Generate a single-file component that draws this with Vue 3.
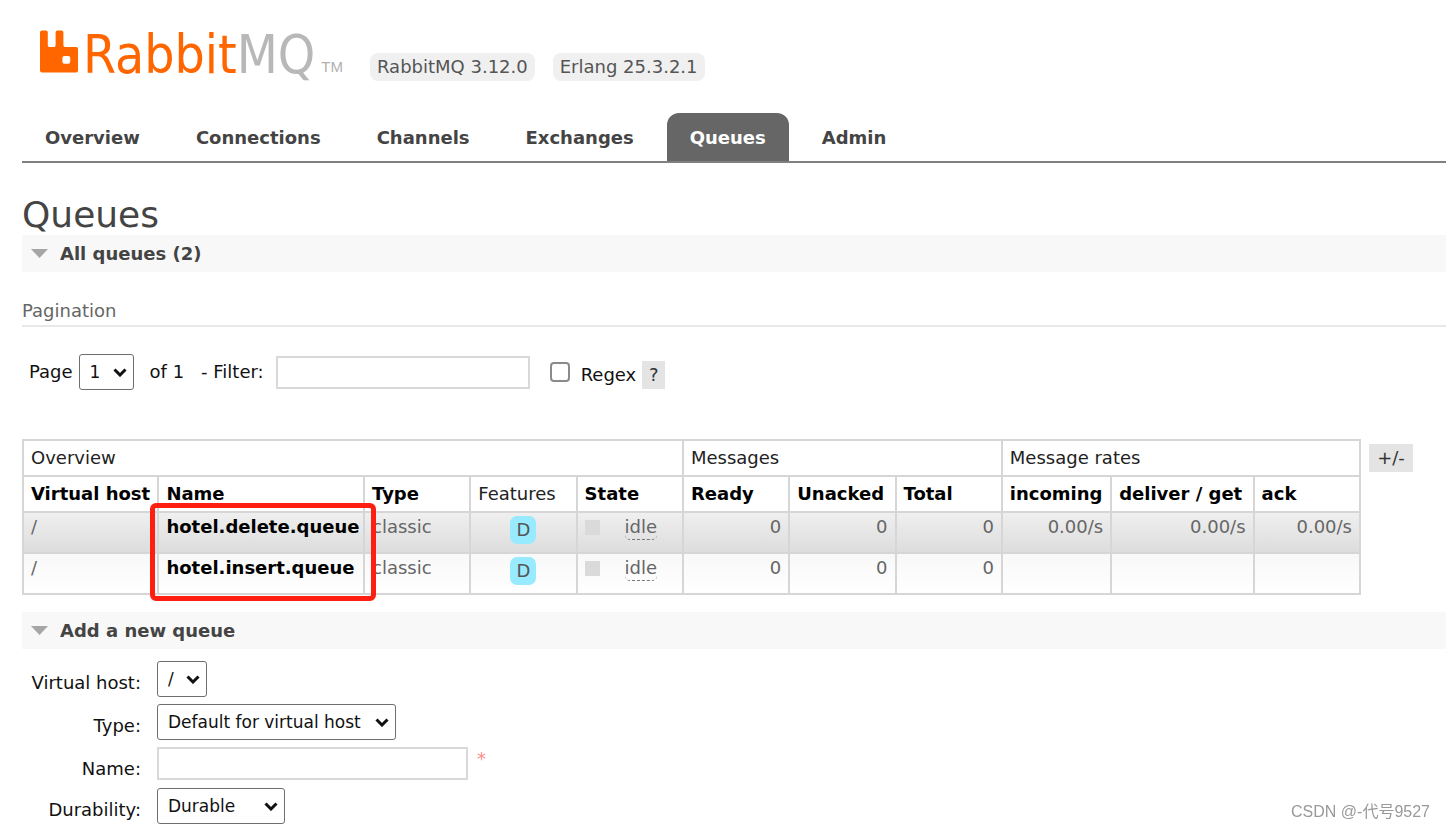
<script setup>
import { ref } from 'vue'

const tabs = ['Overview', 'Connections', 'Channels', 'Exchanges', 'Queues', 'Admin']
const current = ref('Queues')
const filter = ref('')
const regex = ref(false)
const queueName = ref('')

const queues = [
  { vhost: '/', name: 'hotel.delete.queue', type: 'classic', state: 'idle', counts: [0, 0, 0], rates: ['0.00/s', '0.00/s', '0.00/s'] },
  { vhost: '/', name: 'hotel.insert.queue', type: 'classic', state: 'idle', counts: [0, 0, 0], rates: ['', '', ''] },
]
</script>

<template>
  <div class="page">
    <header class="top">
      <a class="logo" href="#" aria-label="RabbitMQ">
        <svg class="mark" viewBox="0 0 40 43" aria-hidden="true">
          <path
            fill="#ff6600"
            fill-rule="evenodd"
            d="M2 0H6Q8 0 8 2V15Q8 17 10 17H14Q16 17 16 15V2Q16 0 18 0H22Q24 0 24 2V15Q24 17 26 17H37Q39 17 39 19V41Q39 43 37 43H2Q0 43 0 41V2Q0 0 2 0ZM25 26Q23 26 23 28V32Q23 34 25 34H29Q31 34 31 32V28Q31 26 29 26Z"
          />
        </svg>
        <span class="word">Rabbit<span class="grey">MQ</span></span>
        <span class="tm">TM</span>
      </a>
      <span class="version">RabbitMQ 3.12.0</span>
      <span class="version">Erlang 25.3.2.1</span>
    </header>

    <nav class="tabs">
      <a v-for="t in tabs" :key="t" href="#" :class="{ active: t === current }" @click.prevent="current = t">{{ t }}</a>
    </nav>

    <main>
      <h1>Queues</h1>
      <h2><svg class="caret" viewBox="0 0 17 9" aria-hidden="true"><path d="M0 0H17L8.500 9Z" /></svg>All queues (2)</h2>

      <h3>Pagination</h3>
      <div class="filters">
        <label for="page">Page</label>
        <span class="select page-select">
          <select id="page"><option>1</option></select>
          <svg viewBox="0 0 14 9" aria-hidden="true"><path d="M1.500 1.500 7 7 12.500 1.500" /></svg>
        </span>
        <span class="of">of 1</span>
        <label class="filter-label" for="filter">- Filter:</label>
        <input id="filter" v-model="filter" class="text filter-input" type="text" />
        <input id="regex" v-model="regex" class="check" type="checkbox" />
        <label class="regex-label" for="regex">Regex</label>
        <button class="help" type="button">?</button>
      </div>

      <div class="listing">
        <div class="table-wrap">
          <table>
            <colgroup>
              <col class="c-vhost" /><col class="c-name" /><col class="c-std" /><col class="c-std" /><col class="c-std" />
              <col class="c-std" /><col class="c-std" /><col class="c-std" />
              <col class="c-in" /><col class="c-get" /><col class="c-std" />
            </colgroup>
            <thead>
              <tr>
                <th class="plain" colspan="5">Overview</th>
                <th class="plain" colspan="3">Messages</th>
                <th class="plain" colspan="3">Message rates</th>
              </tr>
              <tr>
                <th>Virtual host</th>
                <th>Name</th>
                <th>Type</th>
                <th class="plain">Features</th>
                <th>State</th>
                <th>Ready</th>
                <th>Unacked</th>
                <th>Total</th>
                <th>incoming</th>
                <th>deliver / get</th>
                <th>ack</th>
              </tr>
            </thead>
            <tbody>
              <tr v-for="q in queues" :key="q.name">
                <td>{{ q.vhost }}</td>
                <td><a class="queue" href="#">{{ q.name }}</a></td>
                <td>{{ q.type }}</td>
                <td class="mid"><abbr class="feature">D</abbr></td>
                <td><span class="state"><i class="dot"></i><span class="idle">{{ q.state }}</span></span></td>
                <td v-for="(c, i) in q.counts" :key="'c' + i" class="num">{{ c }}</td>
                <td v-for="(r, i) in q.rates" :key="'r' + i" class="num">{{ r }}</td>
              </tr>
            </tbody>
          </table>
          <div class="highlight"></div>
        </div>
        <button class="columns" type="button">+/-</button>
      </div>

      <h2><svg class="caret" viewBox="0 0 17 9" aria-hidden="true"><path d="M0 0H17L8.500 9Z" /></svg>Add a new queue</h2>

      <form class="add" @submit.prevent>
        <label for="vhost">Virtual host:</label>
        <span class="select vhost-select">
          <select id="vhost"><option>/</option></select>
          <svg viewBox="0 0 14 9" aria-hidden="true"><path d="M1.500 1.500 7 7 12.500 1.500" /></svg>
        </span>
        <label for="type">Type:</label>
        <span class="select type-select">
          <select id="type"><option>Default for virtual host</option></select>
          <svg viewBox="0 0 14 9" aria-hidden="true"><path d="M1.500 1.500 7 7 12.500 1.500" /></svg>
        </span>
        <label for="name">Name:</label>
        <span class="name-field">
          <input id="name" v-model="queueName" class="text name-input" type="text" />
          <span class="required">*</span>
        </span>
        <label for="durability">Durability:</label>
        <span class="select durability-select">
          <select id="durability"><option>Durable</option></select>
          <svg viewBox="0 0 14 9" aria-hidden="true"><path d="M1.500 1.500 7 7 12.500 1.500" /></svg>
        </span>
      </form>
    </main>
    <div class="credit">CSDN @-代号9527</div>
  </div>
</template>

<style>
body {
  background: #fff;
  overflow: hidden;
}
</style>

<style scoped>
.page {
  padding-left: 22px;
  font: 18px/24px Verdana, "DejaVu Sans", sans-serif;
  color: #111;
}
.page * {
  box-sizing: border-box;
}
a {
  text-decoration: none;
}
.top {
  display: flex;
  align-items: flex-end;
  gap: 18px;
  height: 81px;
  padding-left: 18px;
}
.logo {
  display: flex;
  align-items: flex-end;
  width: 312px;
  height: 52px;
  padding-bottom: 8px;
  color: #f60;
  white-space: nowrap;
}
.mark {
  flex: none;
  width: 39px;
  height: 43px;
}
.word {
  margin-left: 4px;
  font: 53px/37px "DejaVu Sans Condensed", "Liberation Sans", sans-serif;
}
.grey {
  color: #b8b8b8;
}
.tm {
  margin-left: 6px;
  font: 15px/13px "Liberation Sans", sans-serif;
  color: #b0b0b0;
}
.version {
  padding: 2px 7px;
  border-radius: 8px;
  background: #f0f0f0;
  color: #555;
}
.tabs {
  display: flex;
  gap: 10px;
  height: 82px;
  padding-top: 32px;
  border-bottom: 2px solid #808080;
}
.tabs a {
  padding: 13px 23px 11px;
  border-radius: 12px 12px 0 0;
  font-weight: bold;
  color: #444;
}
.tabs a.active {
  background: #666;
  color: #fff;
}
h1 {
  margin: 32px 0 0;
  font-size: 36px;
  line-height: 40px;
  font-weight: normal;
  color: #444;
}
h2 {
  display: flex;
  align-items: center;
  gap: 12px;
  height: 37px;
  margin: 0;
  padding-left: 9px;
  background: #f8f8f8;
  font-size: 18px;
  color: #444;
}
.caret {
  width: 17px;
  height: 9px;
  fill: #a6a6a6;
}
h3 {
  margin: 27px 0;
  padding-bottom: 2px;
  border-bottom: 2px solid #e8e8e8;
  font-size: 18px;
  font-weight: normal;
  color: #666;
}
.filters {
  display: flex;
  align-items: center;
  height: 36px;
  padding-left: 7px;
  white-space: nowrap;
}
.select {
  position: relative;
  display: block;
}
.select select {
  display: block;
  width: 100%;
  height: 36px;
  padding: 0 0 1px 10px;
  border: 1px solid #6e6e6e;
  border-radius: 3px;
  background: #fff;
  color: #111;
  font: 17px/24px Verdana, "DejaVu Sans", sans-serif;
  appearance: none;
}
.select svg {
  position: absolute;
  right: 7px;
  top: 14px;
  width: 14px;
  height: 9px;
  fill: none;
  stroke: #111;
  stroke-width: 3;
  pointer-events: none;
}
.page-select {
  width: 55px;
  margin-left: 6px;
}
.of {
  margin-left: 16px;
}
.filter-label {
  margin-left: 17px;
}
.text {
  height: 33px;
  border: 2px solid #d9d9d9;
  background: #fff;
  font: 18px/24px Verdana, "DejaVu Sans", sans-serif;
}
.filter-input {
  width: 254px;
  margin-left: 12px;
}
.check {
  width: 20px;
  height: 20px;
  margin: 0 0 0 20px;
  border: 2px solid #8a8a8a;
  border-radius: 4px;
  background: #fff;
  appearance: none;
}
.check:checked {
  background: #0075ff;
}
.regex-label {
  margin-left: 11px;
  padding-top: 6px;
}
.help,
.columns {
  flex: none;
  height: 28px;
  padding: 0;
  border: 0;
  background: #e4e4e4;
  color: #333;
  font: 18px/24px Verdana, "DejaVu Sans", sans-serif;
}
.help {
  width: 23px;
  margin: 6px 0 0 6px;
}
.listing {
  display: flex;
  gap: 8px;
  margin: 49px 33px 17px 0;
}
.table-wrap {
  position: relative;
  flex: 1;
  min-width: 0;
}
.columns {
  width: 44px;
  margin-top: 5px;
}
table {
  width: 100%;
  table-layout: fixed;
  border-collapse: collapse;
  white-space: nowrap;
}
.c-vhost {
  width: 135px;
}
.c-name {
  width: 205px;
}
.c-std {
  width: 106px;
}
.c-in {
  width: 109px;
}
.c-get {
  width: 142px;
}
th,
td {
  height: 36px;
  padding: 0 7px;
  border: 2px solid #d6d6d6;
  text-align: left;
}
th {
  color: #000;
}
th.plain {
  font-weight: normal;
  color: #222;
}
td {
  height: 41px;
  padding-top: 2px;
  vertical-align: top;
  color: #666;
}
tbody tr:nth-child(odd) {
  background: linear-gradient(#f0f0f0, #dcdcdc);
}
tbody tr:nth-child(even) {
  background: linear-gradient(#f8f8f8, #fff);
}
.queue {
  font-weight: bold;
  color: #000;
}
.mid {
  text-align: center;
}
.feature {
  display: block;
  width: 26px;
  margin: 1px auto 0;
  border-radius: 7px;
  background: #98ebff;
  line-height: 28px;
  color: #555;
}
.num {
  text-align: right;
}
.state {
  display: flex;
  align-items: center;
}
.dot {
  width: 15px;
  height: 15px;
  background: #dadada;
}
.idle {
  margin-left: 25px;
  border-bottom: 1px dashed #777;
  border-radius: 5px;
}
.highlight {
  position: absolute;
  left: 128px;
  top: 64px;
  width: 226px;
  height: 98px;
  border: 5px solid #ff1f12;
  border-radius: 6px;
  pointer-events: none;
}
.add {
  display: grid;
  grid-template-columns: 112px 1fr;
  gap: 7px 16px;
  padding: 12px 0 0 7px;
}
.add label {
  padding-top: 10px;
  line-height: 24px;
  text-align: right;
  white-space: nowrap;
}
.vhost-select {
  width: 50px;
}
.type-select {
  width: 239px;
}
.durability-select {
  width: 128px;
}
.name-field {
  display: flex;
  gap: 9px;
}
.name-input {
  width: 311px;
}
.required {
  color: #ff8c8c;
}
.credit {
  position: fixed;
  right: 16px;
  bottom: 5px;
  font: 16px/24px "Liberation Sans", "Noto Sans CJK SC", sans-serif;
  color: #999;
}
</style>
